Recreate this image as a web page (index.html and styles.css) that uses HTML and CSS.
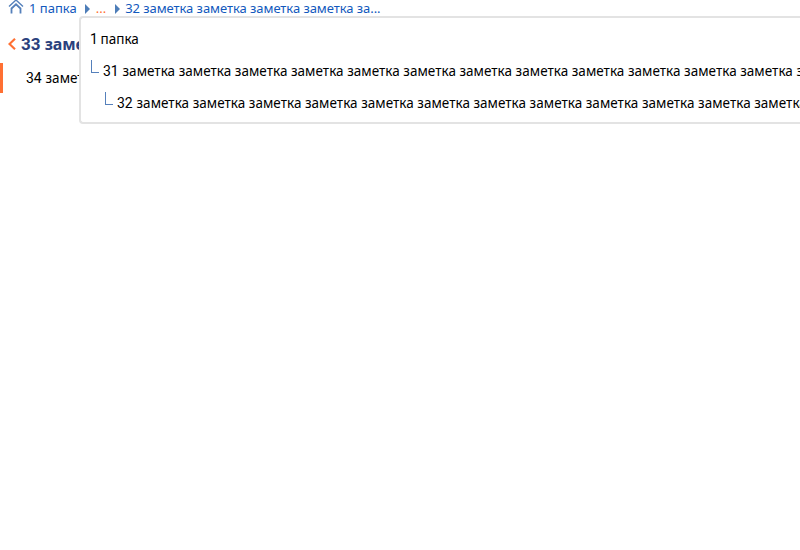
FILE: index.html
```
<!DOCTYPE html>
<html lang="ru">
<head>
<meta charset="utf-8">
<title>Заметки</title>
<link rel="stylesheet" href="styles.css">
</head>
<body>
<nav class="crumbs">
<svg class="home" width="16" height="14" viewBox="0 0 16 14"><path d="M1 6.500 8 0l7 6.500"/><path class="walls" d="M3.500 13.500V8.500L8 4.300l4.500 4.200v5"/></svg>
<span class="crumb">1 папка</span><i class="arrow"></i><span class="dots">...</span><i class="arrow next"></i><span class="crumb long">32 заметка заметка заметка заметка за...</span>
</nav>
<main>
<header class="heading"><svg width="8" height="12" viewBox="0 0 8 12"><path d="M7 .8 1.500 6 7 11.200"/></svg><h1>33 <span class="word">заме</span></h1></header>
<div class="note"><span class="number">34</span><span class="title">замет</span></div>
</main>
<div class="popup">
<div class="row"><span class="number one">1</span><span class="title">папка</span></div>
<div class="row child"><i class="branch"></i><span class="number">31</span><span class="title">заметка заметка заметка заметка заметка заметка заметка заметка заметка заметка заметка заметка заметка</span></div>
<div class="row grandchild"><i class="branch"></i><span class="number">32</span><span class="title">заметка заметка заметка заметка заметка заметка заметка заметка заметка заметка заметка заметка заметка</span></div>
</div>
</body>
</html>
```
FILE: styles.css
```
body { margin: 0; height: 550px; overflow: hidden; position: relative; background: #fff; color: #000; font: 14px/16px Roboto, sans-serif; }
.crumbs { display: flex; height: 16px; padding-left: 8px; color: #1259bd; font-family: "Noto Sans", sans-serif; font-size: 13px; white-space: nowrap; }
.long { letter-spacing: -.06px; }
.home { margin-right: 5px; fill: none; stroke: #5580bb; stroke-width: 1.4; }
.walls { stroke-width: 1.8; }
.arrow { margin: 4px 6px 0 8px; width: 0; height: 0; border: 5px solid transparent; border-left-color: #4d7db8; border-right: 0; }
.next { margin-left: 9px; margin-right: 5px; }
.dots { color: #ff7033; }
.heading { display: flex; align-items: center; gap: 5px; height: 20px; margin: 18px 0 0 8px; }
.heading svg { fill: none; stroke: #ff7033; stroke-width: 2.2; }
h1 { margin: 0; font: bold 17px/20px Roboto, sans-serif; color: #2b417d; }
.word { font-family: "Noto Sans", sans-serif; font-size: 16px; letter-spacing: -.1px; }
.note { display: flex; height: 30px; margin-top: 9px; padding-left: 23px; border-left: 3px solid #ff7033; line-height: 30px; }
.popup { position: absolute; left: 79px; right: 0; top: 16px; height: 104px; border: 2px solid #e3e3e3; border-right: 0; border-radius: 4px 0 0 4px; background: #fff; white-space: nowrap; overflow: hidden; }
.row { display: flex; height: 32px; padding-left: 9px; line-height: 32px; }
.row:first-child { margin-top: 5px; }
.number { width: 19.500px; flex: none; }
.one { width: 10.500px; }
.title { font-family: "Noto Sans", sans-serif; font-size: 13.500px; letter-spacing: .025px; }
.grandchild { padding-left: 23px; }
.branch { flex: none; width: 8px; height: 13px; margin: 5px 4px 0 1px; border: solid #5580bb; border-width: 0 0 1px 1px; box-sizing: border-box; }
```
